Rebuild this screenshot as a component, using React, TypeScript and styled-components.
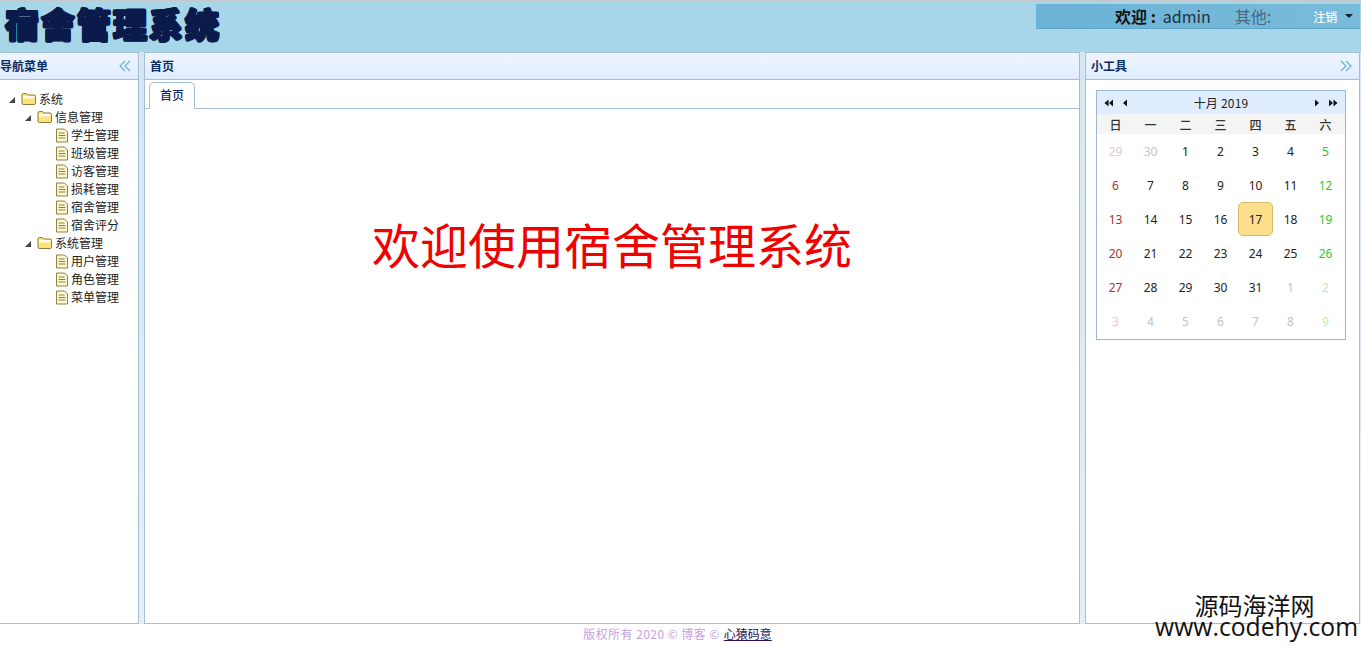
import React, { FC } from "react";
import styled, { createGlobalStyle } from "styled-components";

const GlobalStyle = createGlobalStyle`
  html, body {
    margin: 0;
    padding: 0;
    background: #fff;
    overflow: hidden;
  }
  body {
    font-family: "Liberation Sans", "Noto Sans CJK SC", sans-serif;
    font-size: 12px;
    color: #000;
  }
`;

const Page = styled.div`
  position: relative;
  width: 1361px;
  height: 647px;
  display: flex;
  flex-direction: column;
  overflow: hidden;
`;

const TopBar = styled.header`
  height: 51px;
  flex: none;
  display: flex;
  justify-content: space-between;
  align-items: flex-start;
  background: #a7d6e9;
  border-top: 1px solid #c4c8ca;
`;

const Logo = styled.h1`
  margin: 3px 0 0 5px;
  font-family: "Noto Sans CJK SC", sans-serif;
  font-size: 34px;
  line-height: 40px;
  font-weight: 900;
  letter-spacing: 2px;
  color: #0a1a4b;
  text-shadow: 1.2px 0 #0a1a4b, -1.2px 0 #0a1a4b, 0 1.2px #0a1a4b, 0 -1.2px #0a1a4b,
    0.9px 0.9px #0a1a4b, -0.9px 0.9px #0a1a4b, 0.9px -0.9px #0a1a4b, -0.9px -0.9px #0a1a4b;
`;

const UserBar = styled.div`
  width: 324px;
  height: 24px;
  margin: 3px 1px 0 0;
  display: flex;
  align-items: center;
  background: linear-gradient(90deg, #6ab2d6 0%, #74b8d8 60%, #79bbdb 100%);
  border-bottom: 1px solid #5fa6cc;
  color: #1f3140;
  font-family: "Noto Sans CJK SC", sans-serif;
`;

const Welcome = styled.span`
  margin-left: 79px;
  font-size: 16px;
  white-space: nowrap;
  b {
    font-weight: 700;
    color: #111;
    margin-right: 7px;
  }
`;

const Other = styled.span`
  margin-left: 24px;
  font-size: 16px;
  color: #47687e;
`;

const Logout = styled.span`
  margin-left: 42px;
  font-size: 12px;
  font-weight: 500;
  color: #fff;
`;

const Caret = styled.i`
  margin-left: 8px;
  width: 0;
  height: 0;
  border-left: 4px solid transparent;
  border-right: 4px solid transparent;
  border-top: 4px solid #10202c;
`;

const Workspace = styled.main`
  height: 572px;
  flex: none;
  display: flex;
  gap: 5px;
  padding-right: 1px;
  background: linear-gradient(180deg, #d6e6f5 0%, #e4eff9 100%);
`;

const Panel = styled.section<{ $width?: number; $edge?: boolean }>`
  box-sizing: border-box;
  display: flex;
  flex-direction: column;
  background: #fff;
  border: 1px solid #a3bfd4;
  ${(p) => p.$edge && "border-left: 0;"}
  flex: ${(p) => (p.$width ? `0 0 ${p.$width}px` : "1 1 0")};
`;

const PanelHead = styled.div<{ $flush?: boolean }>`
  box-sizing: border-box;
  height: 27px;
  flex: none;
  display: flex;
  align-items: center;
  justify-content: space-between;
  padding: 0 ${(p) => (p.$flush ? "7px 1px 0" : "7px 1px 5px")};
  background: linear-gradient(180deg, #eff5ff 0%, #e0ecff 100%);
  border-bottom: 1px solid #a3bfd4;
`;

const PanelTitle = styled.span`
  font-family: "Noto Sans CJK SC", sans-serif;
  font-size: 12px;
  font-weight: 700;
  color: #0e2d5f;
`;

const Tree = styled.ul`
  list-style: none;
  margin: 0;
  padding: 10px 0 0;
`;

const TreeRow = styled.li<{ $depth: number }>`
  height: 18px;
  display: flex;
  align-items: center;
  padding-left: ${(p) => 7 + p.$depth * 16}px;
  font-family: "Noto Sans CJK SC", sans-serif;
  font-size: 12px;
  line-height: 18px;
  color: #222;
  white-space: nowrap;
`;

const Expander = styled.span`
  width: 0;
  height: 0;
  flex: none;
  margin: 1px 6px 0 2px;
  border-left: 6px solid transparent;
  border-bottom: 6px solid #444;
`;

const TreeLabel = styled.span`
  margin-left: 2px;
`;

const TabStrip = styled.div`
  box-sizing: border-box;
  height: 29px;
  flex: none;
  display: flex;
  align-items: flex-end;
  padding-left: 4px;
  border-bottom: 1px solid #a3bfd4;
`;

const Tab = styled.div`
  box-sizing: border-box;
  width: 46px;
  height: 27px;
  margin-bottom: -1px;
  padding-bottom: 3px;
  display: flex;
  align-items: center;
  justify-content: center;
  font-family: "Noto Sans CJK SC", sans-serif;
  font-size: 12px;
  font-weight: 500;
  color: #0e2d5f;
  background: #fff;
  border: 1px solid #a3bfd4;
  border-bottom: 0;
  border-radius: 5px 5px 0 0;
`;

const TabBody = styled.div`
  flex: 1;
  display: flex;
  justify-content: center;
`;

const Greeting = styled.h2`
  margin: 99px 0 0;
  font-family: "Noto Sans CJK SC", sans-serif;
  font-size: 48px;
  line-height: 70px;
  font-weight: 400;
  color: #f00000;
`;

const Calendar = styled.div`
  box-sizing: border-box;
  width: 250px;
  height: 250px;
  margin: 10px 0 0 10px;
  border: 1px solid #9db8cc;
  background: #fff;
`;

const CalHead = styled.div`
  height: 23px;
  display: flex;
  align-items: center;
  padding: 0 4px;
  background: #e0ecff;
  font-family: "Noto Sans CJK SC", "Liberation Sans", sans-serif;
  font-size: 12px;
  letter-spacing: 0.2px;
  color: #222;
`;

const CalTitle = styled.span`
  flex: 1;
  text-align: center;
`;

const CalNav = styled.svg`
  width: 10px;
  height: 8px;
  flex: none;
  margin: 0 3px;
`;

const WeekRow = styled.div`
  height: 20px;
  display: grid;
  grid-template-columns: repeat(7, 35px);
  padding-left: 1px;
  align-items: center;
  text-align: center;
  background: #f4f4f4;
  font-family: "Noto Sans CJK SC", sans-serif;
  font-size: 12px;
  font-weight: 500;
  color: #333;
`;

const Days = styled.div`
  display: grid;
  grid-template-columns: repeat(7, 35px);
  grid-auto-rows: 34px;
  padding-left: 1px;
`;

const Day = styled.div<{ $tone: string; $today?: boolean }>`
  box-sizing: border-box;
  display: flex;
  align-items: center;
  justify-content: center;
  font-family: "Noto Sans", sans-serif;
  font-size: 12px;
  color: ${(p) => p.$tone};
  ${(p) =>
    p.$today &&
    `
    background: #fbdf8d;
    border: 1px solid #d8b864;
    border-radius: 5px;
  `}
`;

const Footer = styled.footer`
  flex: 1;
  display: flex;
  justify-content: center;
  gap: 4px;
  padding: 1px 6px 0 0;
  font-family: "Noto Sans CJK SC", sans-serif;
  font-size: 12px;
  line-height: 17px;
  color: #c2a2df;
  span {
    letter-spacing: 0.45px;
  }
  a {
    color: #2b0f52;
  }
`;

const Watermark = styled.div`
  position: absolute;
  right: 3px;
  top: 593px;
  width: 203px;
  text-align: center;
  font-family: "Open Sans", "Noto Sans CJK SC", sans-serif;
  color: #111;
`;

const WatermarkCn = styled.div`
  font-family: "Noto Sans CJK SC", sans-serif;
  font-size: 24px;
  line-height: 24px;
  padding-right: 4px;
`;

const WatermarkUrl = styled.div`
  font-size: 24.7px;
  line-height: 20px;
  white-space: nowrap;
`;

const Chevrons: FC<{ flip?: boolean }> = ({ flip }) => (
  <svg width="12" height="12" viewBox="0 0 12 12" fill="none" stroke="#68b0d8" strokeWidth="1.2">
    <g transform={flip ? "translate(12 0) scale(-1 1)" : undefined}>
      <path d="M6 1 1 6 6 11" />
      <path d="M11 1 6 6 11 11" />
    </g>
  </svg>
);

const FolderIcon: FC = () => (
  <svg width="16" height="14" viewBox="0 0 16 14" style={{ flex: "none" }}>
    <path d="M1 3Q1 1.5 2.5 1.5H5.5L7 3H13Q14.5 3 14.5 4.5V11Q14.5 12.5 13 12.5H2.5Q1 12.5 1 11Z" fill="#fbe27a" stroke="#8f7d35" />
    <path d="M2 4H13.5V6.5H2Z" fill="#fffbe4" />
  </svg>
);

const FileIcon: FC = () => (
  <svg width="14" height="15" viewBox="0 0 14 15" style={{ flex: "none" }}>
    <path d="M1.5 1H9.5L12.5 4V14H1.5Z" fill="#fdf6d0" stroke="#8f8242" />
    <path d="M3.5 5H9.5M3.5 7.5H10.5M3.5 10H10.5" stroke="#8f8242" />
  </svg>
);

const NavIcon: FC<{ dir: "left" | "right"; double?: boolean }> = ({ dir, double }) => (
  <CalNav viewBox="0 0 10 8">
    <g fill="#111" transform={dir === "right" ? "translate(10 0) scale(-1 1)" : undefined}>
      {double ? (
        <>
          <path d="M4.5 0.5V7.5L0.5 4Z" />
          <path d="M9 0.5V7.5L5 4Z" />
        </>
      ) : (
        <path d="M7 0.5V7.5L3 4Z" />
      )}
    </g>
  </CalNav>
);

const menu: { label: string; depth: number; kind: "folder" | "file" }[] = [
  { label: "系统", depth: 0, kind: "folder" },
  { label: "信息管理", depth: 1, kind: "folder" },
  { label: "学生管理", depth: 3, kind: "file" },
  { label: "班级管理", depth: 3, kind: "file" },
  { label: "访客管理", depth: 3, kind: "file" },
  { label: "损耗管理", depth: 3, kind: "file" },
  { label: "宿舍管理", depth: 3, kind: "file" },
  { label: "宿舍评分", depth: 3, kind: "file" },
  { label: "系统管理", depth: 1, kind: "folder" },
  { label: "用户管理", depth: 3, kind: "file" },
  { label: "角色管理", depth: 3, kind: "file" },
  { label: "菜单管理", depth: 3, kind: "file" },
];

const weekdays = ["日", "一", "二", "三", "四", "五", "六"];

const oct = [29, 30, ...Array.from({ length: 31 }, (_, i) => i + 1), 1, 2, 3, 4, 5, 6, 7, 8, 9];

const toneFor = (i: number) => {
  const outside = i < 2 || i > 32;
  const col = i % 7;
  if (col === 0) return outside ? "#e8c8c8" : "#a83232";
  if (col === 6) return outside ? "#b8eeb8" : "#2ec62e";
  return outside ? "#c4c4c4" : "#222";
};

const App: FC = () => (
  <Page>
    <GlobalStyle />
    <TopBar>
      <Logo>宿舍管理系统</Logo>
      <UserBar>
        <Welcome>
          <b>欢迎 :</b>admin
        </Welcome>
        <Other>其他:</Other>
        <Logout>注销</Logout>
        <Caret />
      </UserBar>
    </TopBar>
    <Workspace>
      <Panel $width={139} $edge>
        <PanelHead $flush>
          <PanelTitle>导航菜单</PanelTitle>
          <Chevrons />
        </PanelHead>
        <Tree>
          {menu.map((item) => (
            <TreeRow key={item.label} $depth={item.depth}>
              {item.kind === "folder" && <Expander />}
              {item.kind === "folder" ? <FolderIcon /> : <FileIcon />}
              <TreeLabel>{item.label}</TreeLabel>
            </TreeRow>
          ))}
        </Tree>
      </Panel>
      <Panel>
        <PanelHead>
          <PanelTitle>首页</PanelTitle>
        </PanelHead>
        <TabStrip>
          <Tab>首页</Tab>
        </TabStrip>
        <TabBody>
          <Greeting>欢迎使用宿舍管理系统</Greeting>
        </TabBody>
      </Panel>
      <Panel $width={275}>
        <PanelHead>
          <PanelTitle>小工具</PanelTitle>
          <Chevrons flip />
        </PanelHead>
        <Calendar>
          <CalHead>
            <NavIcon dir="left" double />
            <NavIcon dir="left" />
            <CalTitle>十月 2019</CalTitle>
            <NavIcon dir="right" />
            <NavIcon dir="right" double />
          </CalHead>
          <WeekRow>
            {weekdays.map((d) => (
              <span key={d}>{d}</span>
            ))}
          </WeekRow>
          <Days>
            {oct.map((d, i) => (
              <Day key={i} $tone={toneFor(i)} $today={i === 18}>
                {d}
              </Day>
            ))}
          </Days>
        </Calendar>
      </Panel>
    </Workspace>
    <Footer>
      <span>版权所有 2020 © 博客 ©</span>
      <a href="#">心猿码意</a>
    </Footer>
    <Watermark>
      <WatermarkCn>源码海洋网</WatermarkCn>
      <WatermarkUrl>www.codehy.com</WatermarkUrl>
    </Watermark>
  </Page>
);

export default App;
